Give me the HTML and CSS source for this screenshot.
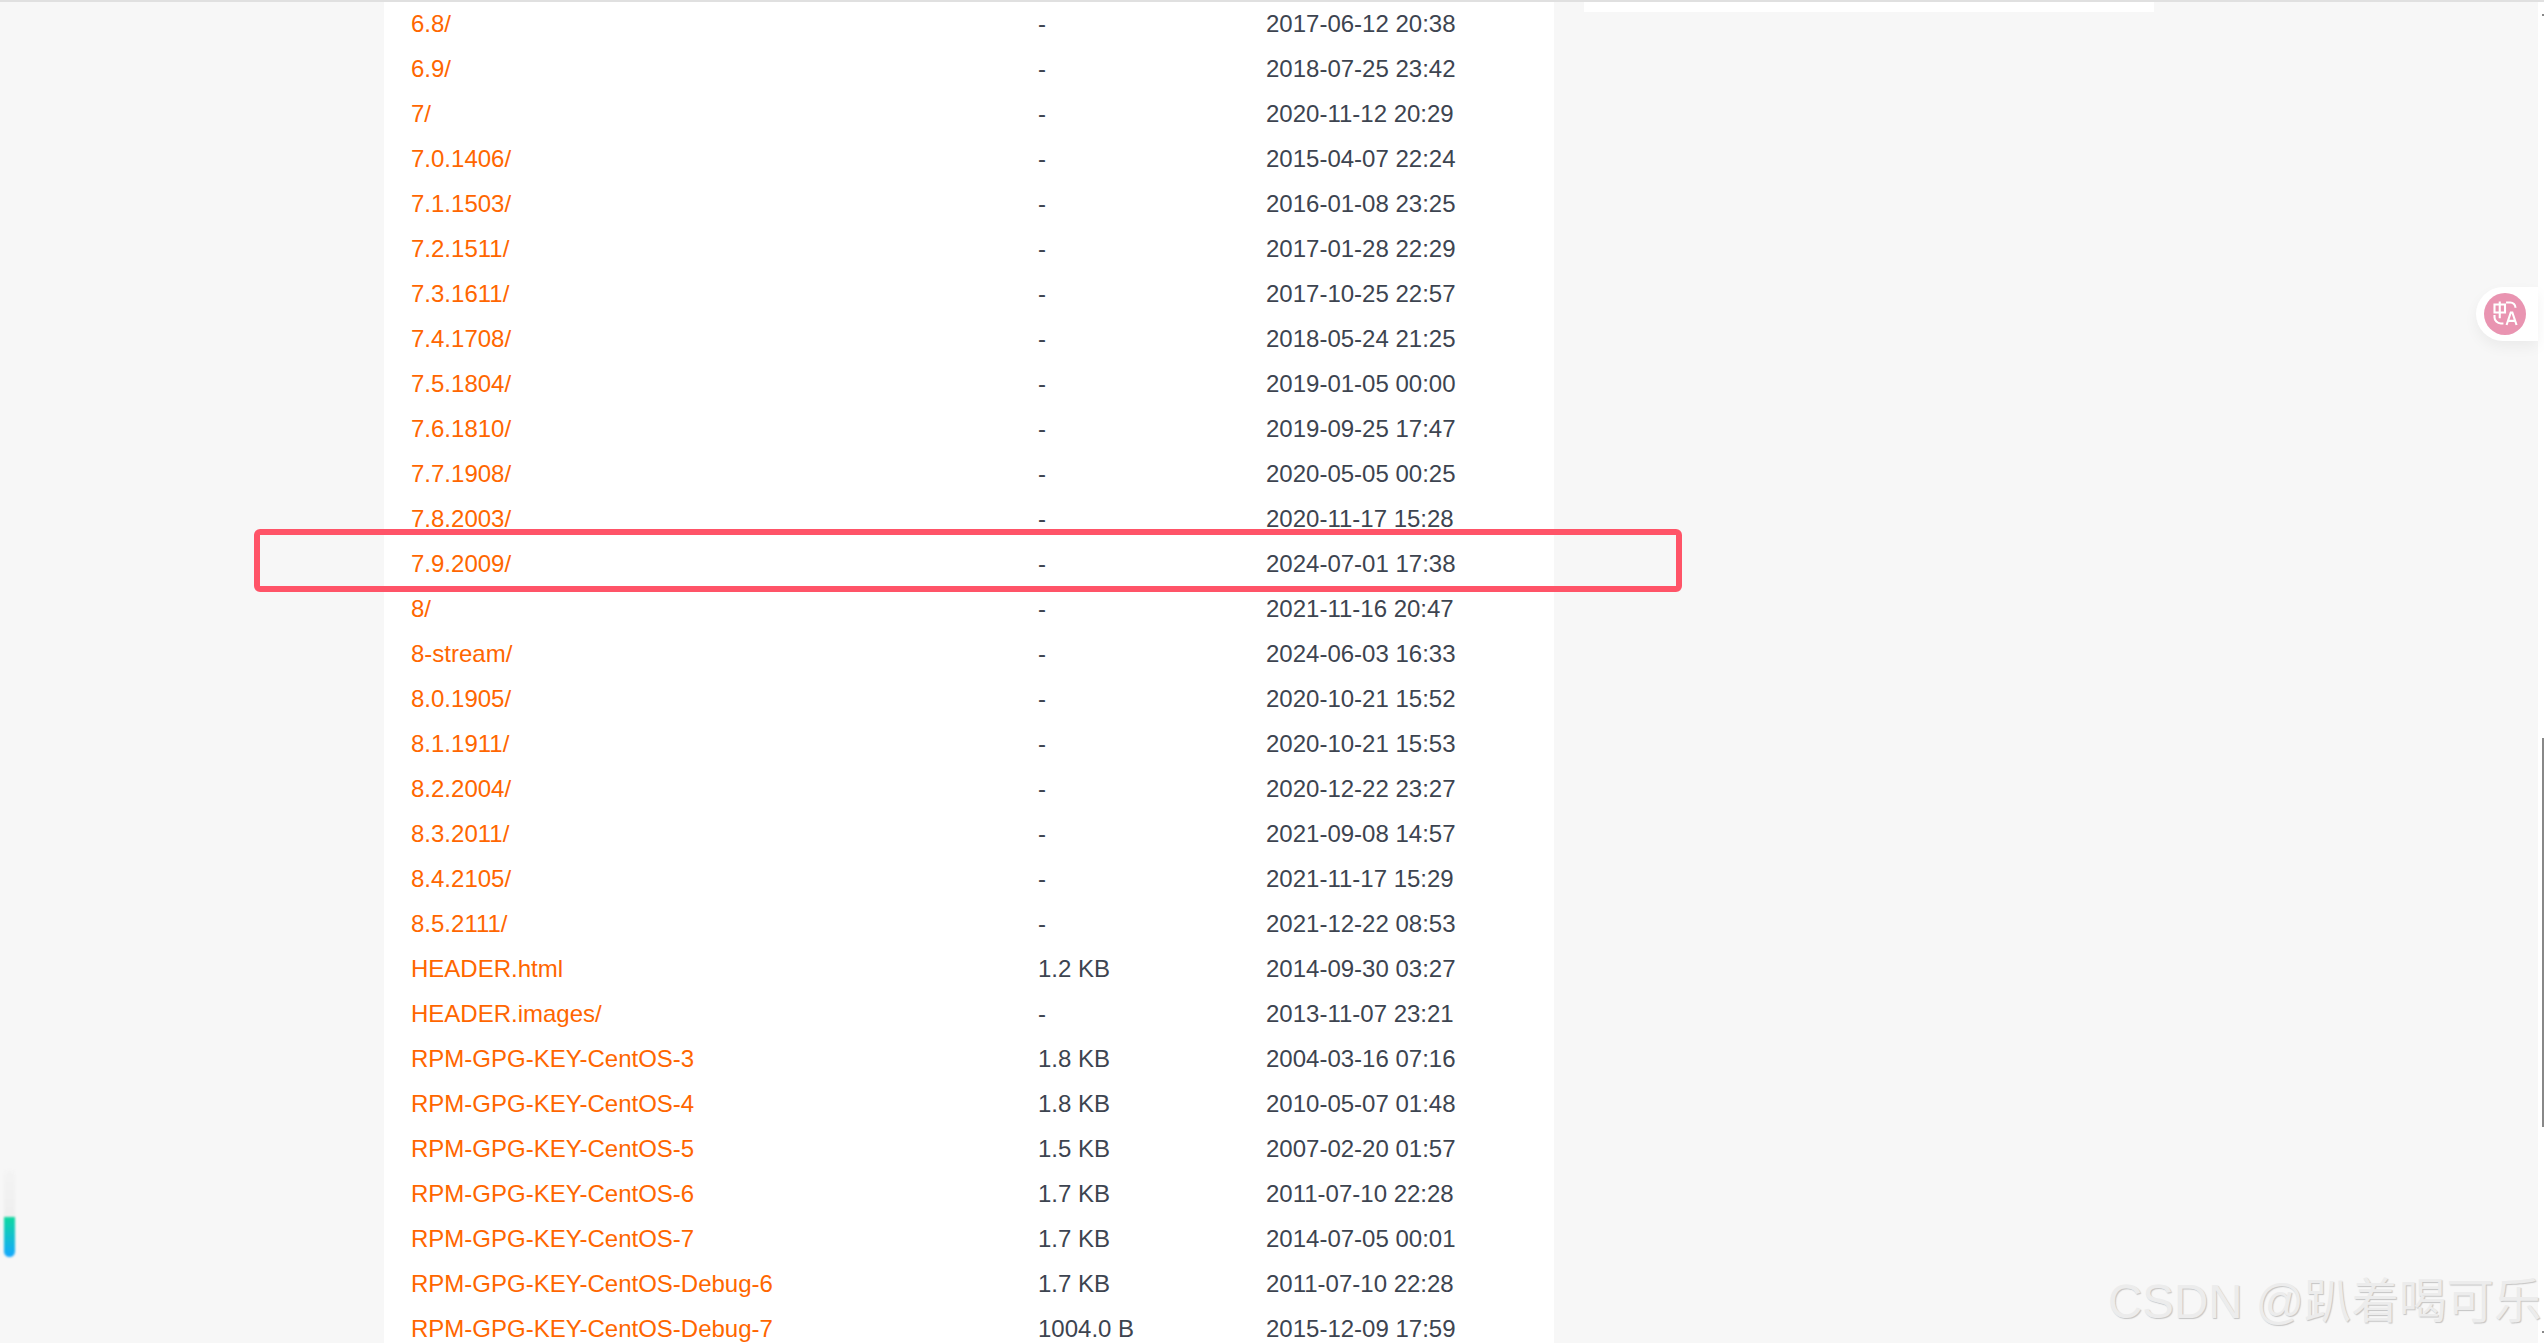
FILE: index.html
```html
<!DOCTYPE html>
<html lang="en">
<head>
<meta charset="utf-8">
<title>Index of /centos</title>
<link rel="stylesheet" href="styles.css">
</head>
<body>
<div class="page">
  <main class="listing">
    <table class="files">
      <tbody>
        <tr><td class="name"><a href="#">6.8/</a></td><td class="size">-</td><td class="date">2017-06-12 20:38</td></tr>
        <tr><td class="name"><a href="#">6.9/</a></td><td class="size">-</td><td class="date">2018-07-25 23:42</td></tr>
        <tr><td class="name"><a href="#">7/</a></td><td class="size">-</td><td class="date">2020-11-12 20:29</td></tr>
        <tr><td class="name"><a href="#">7.0.1406/</a></td><td class="size">-</td><td class="date">2015-04-07 22:24</td></tr>
        <tr><td class="name"><a href="#">7.1.1503/</a></td><td class="size">-</td><td class="date">2016-01-08 23:25</td></tr>
        <tr><td class="name"><a href="#">7.2.1511/</a></td><td class="size">-</td><td class="date">2017-01-28 22:29</td></tr>
        <tr><td class="name"><a href="#">7.3.1611/</a></td><td class="size">-</td><td class="date">2017-10-25 22:57</td></tr>
        <tr><td class="name"><a href="#">7.4.1708/</a></td><td class="size">-</td><td class="date">2018-05-24 21:25</td></tr>
        <tr><td class="name"><a href="#">7.5.1804/</a></td><td class="size">-</td><td class="date">2019-01-05 00:00</td></tr>
        <tr><td class="name"><a href="#">7.6.1810/</a></td><td class="size">-</td><td class="date">2019-09-25 17:47</td></tr>
        <tr><td class="name"><a href="#">7.7.1908/</a></td><td class="size">-</td><td class="date">2020-05-05 00:25</td></tr>
        <tr><td class="name"><a href="#">7.8.2003/</a></td><td class="size">-</td><td class="date">2020-11-17 15:28</td></tr>
        <tr><td class="name"><a href="#">7.9.2009/</a></td><td class="size">-</td><td class="date">2024-07-01 17:38</td></tr>
        <tr><td class="name"><a href="#">8/</a></td><td class="size">-</td><td class="date">2021-11-16 20:47</td></tr>
        <tr><td class="name"><a href="#">8-stream/</a></td><td class="size">-</td><td class="date">2024-06-03 16:33</td></tr>
        <tr><td class="name"><a href="#">8.0.1905/</a></td><td class="size">-</td><td class="date">2020-10-21 15:52</td></tr>
        <tr><td class="name"><a href="#">8.1.1911/</a></td><td class="size">-</td><td class="date">2020-10-21 15:53</td></tr>
        <tr><td class="name"><a href="#">8.2.2004/</a></td><td class="size">-</td><td class="date">2020-12-22 23:27</td></tr>
        <tr><td class="name"><a href="#">8.3.2011/</a></td><td class="size">-</td><td class="date">2021-09-08 14:57</td></tr>
        <tr><td class="name"><a href="#">8.4.2105/</a></td><td class="size">-</td><td class="date">2021-11-17 15:29</td></tr>
        <tr><td class="name"><a href="#">8.5.2111/</a></td><td class="size">-</td><td class="date">2021-12-22 08:53</td></tr>
        <tr><td class="name"><a href="#">HEADER.html</a></td><td class="size">1.2 KB</td><td class="date">2014-09-30 03:27</td></tr>
        <tr><td class="name"><a href="#">HEADER.images/</a></td><td class="size">-</td><td class="date">2013-11-07 23:21</td></tr>
        <tr><td class="name"><a href="#">RPM-GPG-KEY-CentOS-3</a></td><td class="size">1.8 KB</td><td class="date">2004-03-16 07:16</td></tr>
        <tr><td class="name"><a href="#">RPM-GPG-KEY-CentOS-4</a></td><td class="size">1.8 KB</td><td class="date">2010-05-07 01:48</td></tr>
        <tr><td class="name"><a href="#">RPM-GPG-KEY-CentOS-5</a></td><td class="size">1.5 KB</td><td class="date">2007-02-20 01:57</td></tr>
        <tr><td class="name"><a href="#">RPM-GPG-KEY-CentOS-6</a></td><td class="size">1.7 KB</td><td class="date">2011-07-10 22:28</td></tr>
        <tr><td class="name"><a href="#">RPM-GPG-KEY-CentOS-7</a></td><td class="size">1.7 KB</td><td class="date">2014-07-05 00:01</td></tr>
        <tr><td class="name"><a href="#">RPM-GPG-KEY-CentOS-Debug-6</a></td><td class="size">1.7 KB</td><td class="date">2011-07-10 22:28</td></tr>
        <tr><td class="name"><a href="#">RPM-GPG-KEY-CentOS-Debug-7</a></td><td class="size">1004.0 B</td><td class="date">2015-12-09 17:59</td></tr>
      </tbody>
    </table>
  </main>
  <aside class="side-panel"></aside>
</div>
<div class="scrollbar">
  <span class="scroll-dot"></span>
  <span class="scroll-thumb"></span>
  <span class="scroll-dot scroll-dot-end"></span>
</div>

<div class="highlight"></div>

<div class="translate-tab">
  <div class="translate-badge">
    <svg class="translate-icon" viewBox="0 0 40 40" fill="none" stroke="#fff" stroke-width="2" aria-hidden="true">
      <path d="M10 11h10v7.500H10zM15 8v16"/>
      <path d="M21 9h4a5 5 0 0 1 5 5"/>
      <path d="M10 21v2a6 6 0 0 0 6 6h2.500"/>
      <path d="M21.500 30.500l4-12h1.500l4 12M23 26.500h6.500"/>
    </svg>
  </div>
</div>

<div class="progress"><div class="progress-fill"></div></div>

<div class="watermark">CSDN @趴着喝可乐</div>
</body>
</html>
```
FILE: styles.css
```css
* { box-sizing: border-box; }
html, body {
  margin: 0;
  height: 100%;
  overflow: hidden;
}
body {
  display: flex;
  background: #f7f7f7;
  border-top: 2px solid #e0e0e0;
  font-family: "Liberation Sans", Arial, sans-serif;
  font-size: 24px;
  color: #3d4450;
}
.page {
  flex: 1;
  display: flex;
  align-items: flex-start;
  padding-left: 384px;
}
.listing {
  width: 1170px;
  flex: none;
  background: #fff;
  padding-left: 27px;
}
.files {
  border-collapse: collapse;
  table-layout: fixed;
  width: 100%;
}
.files td {
  height: 45px;
  padding: 0 0 2px;
  white-space: nowrap;
  line-height: 27px;
}
.name { width: 627px; }
.size { width: 228px; }
.name a {
  color: #f60;
  text-decoration: none;
}
.side-panel {
  flex: none;
  width: 570px;
  height: 10px;
  margin-left: 30px;
  background: #fff;
}
.scrollbar {
  flex: none;
  width: 6px;
  display: flex;
  flex-direction: column;
  align-items: flex-end;
  background: #fff;
  padding-top: 12px;
}
.scroll-dot {
  width: 2px;
  height: 2px;
  background: #888;
}
.scroll-thumb {
  width: 2px;
  height: 389px;
  margin-top: 722px;
  background: #888;
}
.scroll-dot-end {
  margin-top: 204px;
}
.highlight {
  position: absolute;
  left: 254px;
  top: 529px;
  width: 1428px;
  height: 63px;
  border: 6px solid #ff5468;
  border-radius: 6px;
}
.translate-tab {
  position: absolute;
  right: 6px;
  top: 287px;
  width: 62px;
  height: 54px;
  padding: 6px 0 0 8px;
  background: #fff;
  border-radius: 27px 0 0 27px;
  box-shadow: 0 6px 14px rgba(0, 0, 0, .05);
}
.translate-badge {
  width: 42px;
  height: 42px;
  border-radius: 50%;
  background: #e994b1;
}
.translate-icon {
  display: block;
  width: 42px;
  height: 42px;
}
.progress {
  position: absolute;
  left: 4px;
  top: 1170px;
  width: 11px;
  height: 87px;
  border-radius: 6px;
  overflow: hidden;
  background: linear-gradient(180deg, #f4f4f4, #eaeaea);
  filter: blur(.8px);
}
.progress-fill {
  margin-top: 47px;
  height: 40px;
  background: linear-gradient(180deg, #0fd8a0, #14a8ff);
}
.watermark {
  position: absolute;
  left: 2108px;
  top: 1274px;
  font-family: "Liberation Sans", "Noto Sans CJK SC", sans-serif;
  font-size: 47.500px;
  line-height: 56px;
  white-space: nowrap;
  color: #ececec;
  text-shadow: 1px 1px 1px #c4c4c4;
}
```
